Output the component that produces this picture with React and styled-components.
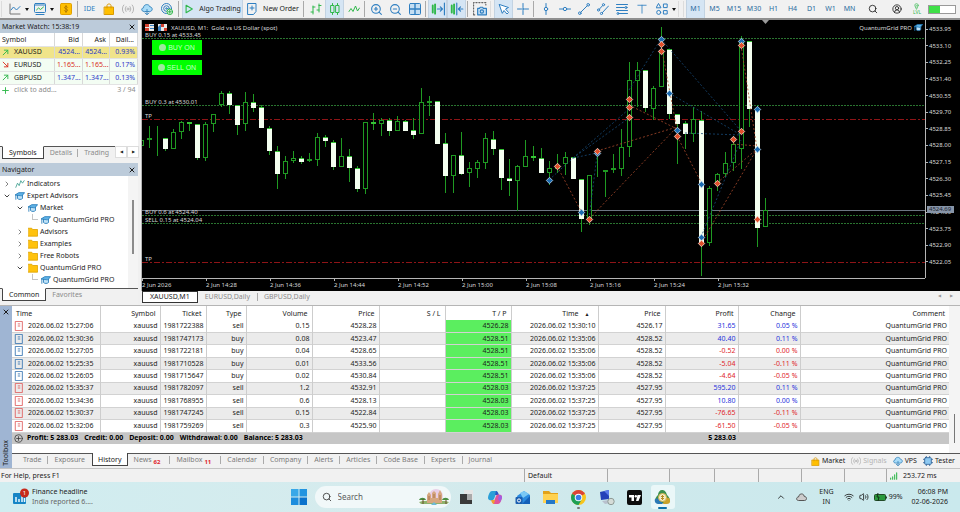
import React, { useState } from 'react';
import styled, { createGlobalStyle, css } from 'styled-components';
import { ZoomIn, ZoomOut, Search, CircleUserRound, Wifi, Volume2, X, ChevronDown, ChevronRight, ChevronUp } from 'lucide-react';

const GlobalStyle = createGlobalStyle`
  * {
    box-sizing: border-box;
  }

  body {
    margin: 0;
    background: #f0f0f0;
    color: #1c1c1c;
    font-family: 'Noto Sans', 'Open Sans', sans-serif;
    font-size: 7px;
    line-height: 10px;
  }

  button,
  input {
    margin: 0;
    padding: 0;
    border: 0;
    background: none;
    color: inherit;
    font: inherit;
  }

  svg {
    display: block;
    flex: none;
  }
`;

const Window = styled.div`
  display: flex;
  flex-direction: column;
  height: 100vh;
  overflow: hidden;
`;

/* ---------- icons ---------- */

const blue = '#2f7fc1';
const green = '#2fb84a';

const Glyph = ({ size = 12, color = blue, children, ...rest }) => (
  <svg
    width={size}
    height={size}
    viewBox="0 0 12 12"
    fill="none"
    stroke={color}
    strokeWidth="1"
    strokeLinecap="round"
    strokeLinejoin="round"
    aria-hidden="true"
    {...rest}
  >
    {children}
  </svg>
);

const LineChartIcon = () => (
  <Glyph color="#777">
    <path d="M1 1v10h10" />
    <path d="M2 7l2.500-3 3 3L11 3.500" stroke={blue} />
  </Glyph>
);

const WindowChartIcon = () => (
  <Glyph>
    <rect x="0.500" y="0.500" width="11" height="9" rx="1" />
    <path d="M1 2h10M2 11.500h8" />
    <path d="M2.500 7l2-2 2 1.500L9.500 4" stroke={green} />
  </Glyph>
);

const DollarIcon = () => (
  <Glyph color="#e0a000">
    <rect x="0.500" y="0.500" width="11" height="11" rx="1" fill="#ffbf00" />
    <path d="M7.500 4.200C7 3 4.500 3.200 4.600 4.700 4.700 6.200 7.500 5.500 7.500 7.200 7.500 8.800 5 9 4.400 7.700M6 2.500v7" stroke="#b07800" />
  </Glyph>
);

const BagIcon = ({ size }) => (
  <Glyph size={size} color="#d99a00">
    <path d="M1.500 4h9v7.500h-9z" fill="#ffbf00" />
    <path d="M4 5V2.500C4 0.500 8 0.500 8 2.500V5" />
  </Glyph>
);

const SignalsIcon = ({ size }) => (
  <Glyph size={size} color="#b4b4b4">
    <circle cx="6" cy="6" r="1" />
    <path d="M4 3.500a4 4 0 0 0 0 5M8 3.500a4 4 0 0 1 0 5M1.800 2a6 6 0 0 0 0 8M10.200 2a6 6 0 0 1 0 8" />
  </Glyph>
);

const CloudDownIcon = ({ size }) => (
  <Glyph size={size} color="#3c87bd">
    <path d="M3 8.500C0 8.500 0 5 2.500 4.800 2.500 1 8 0.500 8.800 3.800 12 4 12 8.500 9 8.500z" fill="#a9dcf8" />
    <path d="M6 6.500v5M4 10l2 1.500L8 10" />
  </Glyph>
);

const RadarIcon = () => (
  <Glyph>
    <circle cx="5.500" cy="5.500" r="5" />
    <circle cx="5.500" cy="5.500" r="2.800" />
    <circle cx="5.500" cy="5.500" r="0.800" />
    <circle cx="8.800" cy="8.800" r="2.800" fill="#f0f0f0" stroke={green} />
    <path d="M8.800 7.300v3M7.300 8.800h3" stroke={green} />
  </Glyph>
);

const PlayIcon = () => (
  <Glyph size={10} color={green}>
    <path d="M2.500 1.500L10 6l-7.500 4.500z" strokeWidth="1.300" />
  </Glyph>
);

const NewOrderIcon = () => (
  <Glyph>
    <path d="M2 0.500h8v8l-2.500 3H2zM4 5h4M6 3v4" />
  </Glyph>
);

const BarsIcon = () => (
  <Glyph color={green}>
    <path d="M3 3v8M1 9h2M3 4h2M9 1v8M7 7h2M9 2.500h2" />
  </Glyph>
);

const CandlesIcon = () => (
  <Glyph color={green}>
    <path d="M3.500 0.500v11M8.500 0.500v11" />
    <rect x="2" y="2.500" width="3" height="7" fill="#d9e7f5" />
    <rect x="7" y="2.500" width="3" height="7" fill="#d9e7f5" />
  </Glyph>
);

const ZigzagIcon = () => (
  <Glyph color={green}>
    <path d="M1 8.500l2-3 2 3 2.500-5.500 2 5 2-3" />
  </Glyph>
);

const TilesIcon = () => (
  <Glyph>
    <rect x="0.500" y="0.500" width="11" height="11" rx="1" fill="#c4def2" />
    <path d="M6 1v10M1 6h10" strokeWidth="1.400" />
  </Glyph>
);

const ScrollEndIcon = () => (
  <Glyph size={14}>
    <path d="M1.500 3v6M3.500 2v8" stroke={green} strokeWidth="1.600" />
    <path d="M5.500 6h4M8 4.200L9.800 6 8 7.800M11.500 1v10" />
  </Glyph>
);

const ShiftIcon = () => (
  <Glyph size={14}>
    <path d="M1.500 3v6M3.500 2v8" stroke={green} strokeWidth="1.600" />
    <path d="M5.800 1v10M11 6H7.500M9 4.200L7.200 6 9 7.800" />
  </Glyph>
);

const CameraIcon = () => (
  <Glyph size={14}>
    <path d="M0.500 11V0.500h10.500v2M0.500 11h2" stroke="#666" strokeDasharray="1 1.500" />
    <path d="M4 5.500h1.500l0.700-1h2l0.700 1h2.600v5.500H4z" fill="#c4def2" />
    <circle cx="7.600" cy="8.200" r="1.400" />
  </Glyph>
);

const CursorIcon = () => (
  <Glyph>
    <path d="M1.500 1.500l9 3L7.500 6l3 3.500-1.500 1.500L6 7.500 4.500 10z" fill="#fff" />
  </Glyph>
);

const CrosshairIcon = () => (
  <Glyph>
    <path d="M6 0.500v4M6 7.500v4M0.500 6h4M7.500 6h4" />
    <circle cx="6" cy="6" r="0.500" />
  </Glyph>
);

const VerticalIcon = () => (
  <Glyph>
    <path d="M6 0.500v3.800M6 7.700v3.800" />
    <circle cx="6" cy="6" r="1.700" />
  </Glyph>
);

const HorizontalIcon = () => (
  <Glyph>
    <path d="M0.500 6h3.800M7.700 6h3.800" />
    <circle cx="6" cy="6" r="1.700" />
  </Glyph>
);

const TrendIcon = () => (
  <Glyph>
    <circle cx="1.800" cy="10.200" r="1.300" />
    <circle cx="10.200" cy="1.800" r="1.300" />
    <path d="M2.800 9.200l6.400-6.400" />
  </Glyph>
);

const ChannelIcon = () => (
  <Glyph>
    <circle cx="1.500" cy="7" r="1.100" />
    <circle cx="6.500" cy="1.700" r="1.100" />
    <circle cx="4.500" cy="10.500" r="1.100" />
    <path d="M2.300 6.200l3.400-3.700M5.300 9.700L11.500 3" />
  </Glyph>
);

const FibIcon = () => (
  <Glyph>
    <path d="M0.500 1.500h11M0.500 4.500h8M0.500 7.500h11M3 10.500h8.500" />
    <circle cx="10" cy="4.500" r="1" />
    <circle cx="2" cy="10.500" r="1" />
  </Glyph>
);

const TextToolIcon = () => (
  <Glyph size={10}>
    <path d="M1 1.500h10M6 1.500v9.500" />
  </Glyph>
);

const ShapesIcon = () => (
  <Glyph>
    <path d="M2.700 0.800L5 4.800H0.500zM7.800 1h3.400v3.600H7.800z" />
    <circle cx="2.700" cy="9.400" r="2" />
    <rect x="7.800" y="7.600" width="3.400" height="3.400" />
  </Glyph>
);

const LevelIcon = () => (
  <Glyph color={green} size={7}>
    <circle cx="6" cy="4" r="3" />
    <path d="M4 7l2 4 2-4M5 4h2" />
  </Glyph>
);

const CapIcon = ({ size = 10 }) => (
  <Glyph size={size} color="#1f78b8">
    <path d="M3 5v4c1.500 1.500 4.500 1.500 6 0V5" fill="#bfe2f7" />
    <path d="M0.500 4.500L4.500 2h7L8.500 5.500z" fill="#5fb2e6" />
    <path d="M1 5v5" />
  </Glyph>
);

const FolderIcon = ({ size = 10 }) => (
  <Glyph size={size} color="#dfa300">
    <path d="M0.500 1.500h4l1 1.500h6v8h-11z" fill="#ffc20d" />
  </Glyph>
);

const IndicatorIcon = () => (
  <Glyph size={10} color="#3f9f8f">
    <path d="M1 10l2-5 2 3 2-6 2 3 2-3" />
  </Glyph>
);

const DocIcon = ({ side }) => (
  <Glyph size={10} color={side === 'buy' ? '#2e6fae' : '#dd5555'}>
    <path d="M2 0.500h8v11H2zM5 3.500h2M5 6h2" />
  </Glyph>
);

/* ---------- toolbar ---------- */

const Toolbar = styled.header`
  display: flex;
  align-items: stretch;
  flex: none;
  height: 20px;
  border-bottom: 2px solid #8f8f8f;
  background: #f1f1f1;
  overflow: hidden;
`;

const ToolButton = styled.button`
  display: flex;
  flex: none;
  align-items: center;
  justify-content: center;
  gap: 5px;
  width: ${({ $w }) => $w || 19}px;
  color: ${({ $color }) => $color || '#1c1c1c'};
  white-space: nowrap;

  ${({ $active }) =>
    $active &&
    css`
      background: #d5e5f4;
      border-left: 1px solid #c3d3e2;
      border-right: 1px solid #c3d3e2;
    `}
`;

const Caret = styled.button`
  display: flex;
  flex: none;
  align-items: center;
  justify-content: center;
  width: 6px;

  &::before {
    content: '';
    border: 2px solid transparent;
    border-top: 3px solid #111;
    border-bottom: 0;
  }
`;

const Separator = styled.span`
  flex: none;
  width: 1px;
  margin: 1px ${({ $wide }) => ($wide ? 3 : 2)}px 1px 1px;
  background: ${({ $faint }) => ($faint ? '#dcdcdc' : '#a9a9a9')};
`;

const Battery = styled.div`
  flex: none;
  width: 28px;
  height: 9px;
  margin: 5px 0;
  border: 1px solid #999;
  background: linear-gradient(90deg, #3fe048 11px, #fff 11px);
`;

const LevelLabel = styled.span`
  display: flex;
  flex-direction: column;
  align-items: center;
  color: ${green};
  font-size: 5px;
  line-height: 5px;
`;

const timeframes = ['M1', 'M5', 'M15', 'M30', 'H1', 'H4', 'D1', 'W1', 'MN'];

const TopToolbar = () => {
  const [frame, setFrame] = useState('M1');

  return (
    <Toolbar>
      <Separator $wide $faint />
      <ToolButton aria-label="Line chart"><LineChartIcon /></ToolButton>
      <Caret aria-label="Chart menu" />
      <ToolButton aria-label="Indicators"><WindowChartIcon /></ToolButton>
      <Caret aria-label="Indicator menu" />
      <ToolButton $w={21} aria-label="Trade"><DollarIcon /></ToolButton>
      <Separator />
      <ToolButton $color={blue}>IDE</ToolButton>
      <ToolButton aria-label="Market"><BagIcon /></ToolButton>
      <ToolButton aria-label="Signals"><SignalsIcon /></ToolButton>
      <ToolButton aria-label="VPS"><CloudDownIcon /></ToolButton>
      <ToolButton $w={21} aria-label="Network"><RadarIcon /></ToolButton>
      <Separator $wide />
      <ToolButton $w={61} $active><PlayIcon />Algo Trading</ToolButton>
      <ToolButton $w={59}><NewOrderIcon />New Order</ToolButton>
      <Separator />
      <ToolButton aria-label="Bars"><BarsIcon /></ToolButton>
      <ToolButton $active aria-label="Candles"><CandlesIcon /></ToolButton>
      <ToolButton aria-label="Line"><ZigzagIcon /></ToolButton>
      <Separator />
      <ToolButton $color={blue} aria-label="Zoom in"><ZoomIn size={13} strokeWidth={2} /></ToolButton>
      <ToolButton $color={blue} aria-label="Zoom out"><ZoomOut size={13} strokeWidth={2} /></ToolButton>
      <ToolButton aria-label="Tile windows"><TilesIcon /></ToolButton>
      <Separator />
      <ToolButton $active aria-label="Auto scroll"><ScrollEndIcon /></ToolButton>
      <ToolButton $active aria-label="Chart shift"><ShiftIcon /></ToolButton>
      <Separator />
      <ToolButton aria-label="Screenshot"><CameraIcon /></ToolButton>
      <Separator $wide $faint />
      <ToolButton $active aria-label="Cursor"><CursorIcon /></ToolButton>
      <ToolButton aria-label="Crosshair"><CrosshairIcon /></ToolButton>
      <Separator />
      <ToolButton aria-label="Vertical line"><VerticalIcon /></ToolButton>
      <ToolButton aria-label="Horizontal line"><HorizontalIcon /></ToolButton>
      <ToolButton aria-label="Trend line"><TrendIcon /></ToolButton>
      <ToolButton aria-label="Channel"><ChannelIcon /></ToolButton>
      <ToolButton aria-label="Fibonacci"><FibIcon /></ToolButton>
      <ToolButton $w={21} aria-label="Text"><TextToolIcon /></ToolButton>
      <ToolButton aria-label="Shapes"><ShapesIcon /></ToolButton>
      <Caret aria-label="Shape menu" />
      <Separator $wide $faint />
      <Separator $faint />
      {timeframes.map(name => (
        <ToolButton
          key={name}
          $w={name.length > 2 ? 20 : 19}
          $color="#2b6c9f"
          $active={frame === name}
          onClick={() => setFrame(name)}
        >
          {name}
        </ToolButton>
      ))}
      <ToolButton $w={28} aria-label="Search"><Search size={10} strokeWidth={2} /></ToolButton>
      <ToolButton aria-label="Account"><CircleUserRound size={10} strokeWidth={2} /></ToolButton>
      <ToolButton $w={22} aria-label="Level">
        <LevelLabel><LevelIcon />LVL</LevelLabel>
      </ToolButton>
      <Battery />
    </Toolbar>
  );
};

/* ---------- side panels ---------- */

const Workspace = styled.main`
  display: grid;
  grid-template-columns: 138px minmax(0, 1fr);
  column-gap: 3px;
  flex: 1;
  min-height: 0;
`;

const Sidebar = styled.aside`
  display: flex;
  flex-direction: column;
  min-height: 0;
`;

const Panel = styled.section`
  display: flex;
  flex-direction: column;
  min-height: 0;
  height: ${({ $height }) => ($height ? `${$height}px` : 'auto')};
  flex: ${({ $height }) => ($height ? 'none' : '1')};
`;

const PanelTitle = styled.h2`
  display: flex;
  align-items: center;
  justify-content: space-between;
  flex: none;
  height: 13px;
  margin: 0;
  padding: 0 2px;
  background: #bccbda;
  font-size: 7px;
  font-weight: 400;
`;

const PanelBody = styled.div`
  flex: 1;
  min-height: 0;
  background: #fff;
  overflow: hidden;
`;

const PanelTabs = styled.div`
  display: flex;
  align-items: flex-start;
  flex: none;
  height: ${({ $height }) => $height}px;
  padding-left: 2px;
  background: linear-gradient(#555, #555) top / 100% 1px no-repeat #f1f1f1;
`;

const PanelTab = styled.button`
  height: 13px;
  padding: 0 6px;
  color: #8b8b8b;
  white-space: nowrap;
  background: linear-gradient(#aaa, #aaa) right 3px / 1px 8px no-repeat;

  &:last-of-type {
    background: none;
  }

  ${({ $active }) =>
    $active &&
    css`
      border: 1px solid #444;
      border-top-color: #fff;
      background: #fff;
      color: #1c1c1c;
    `}
`;

const TabArrows = styled.div`
  display: flex;
  margin-left: auto;
  height: 12px;

  button {
    width: 12px;
    border: 1px solid #ddd;
    background: #fff;
    font-size: 4px;
    line-height: 8px;
  }
`;

const QuoteTable = styled.table`
  width: 100%;
  height: 63px;
  border-collapse: collapse;
  table-layout: fixed;

  th,
  td {
    height: 12px;
    padding: 0 2px;
    border-right: 1px solid #d8d8d8;
    border-bottom: 1px solid #e3e3e3;
    font-weight: 400;
    line-height: 10px;
    text-align: right;
    vertical-align: middle;
    white-space: nowrap;
  }

  th {
    height: 13px;
    padding: 2px 3px 0 2px;
  }

  th:first-child,
  td:first-child {
    text-align: left;
  }

  tfoot td {
    border: 0;
    color: #8b8b8b;
  }
`;

const QuoteRow = styled.tr`
  background: ${({ $selected }) => ($selected ? '#f0e48a' : '#f3fdf3')};
`;

const Quote = styled.td`
  color: ${({ $down }) => ($down ? '#d9301f' : '#2b39c9')};
`;

const SymbolName = styled.span`
  display: flex;
  align-items: center;
  gap: 5px;
`;

const quotes = [
  { name: 'XAUUSD', bid: '4524...', ask: '4524...', daily: '0.93%' },
  { name: 'EURUSD', bid: '1.165...', ask: '1.165...', daily: '0.17%', down: true },
  { name: 'GBPUSD', bid: '1.347...', ask: '1.347...', daily: '0.13%' },
];

const MarketWatch = () => (
  <Panel $height={143}>
    <PanelTitle>
      Market Watch: 15:38:19
      <X size={8} strokeWidth={3} />
    </PanelTitle>
    <PanelBody>
      <QuoteTable>
        <colgroup>
          <col />
          <col width="28" />
          <col width="27" />
          <col width="28" />
        </colgroup>
        <thead>
          <tr>
            <th>Symbol</th>
            <th>Bid</th>
            <th>Ask</th>
            <th>Dail...</th>
          </tr>
        </thead>
        <tbody>
          {quotes.map((q, i) => (
            <QuoteRow key={q.name} $selected={i === 0}>
              <td>
                <SymbolName>
                  <Glyph size={7} color={q.down ? '#d9301f' : green}>
                    {q.down ? <path d="M2 2l8 8M10 4v6H4" strokeWidth="1.600" /> : <path d="M2 10l8-8M4 2h6v6" strokeWidth="1.600" />}
                  </Glyph>
                  {q.name}
                </SymbolName>
              </td>
              <Quote $down={q.down}>{q.bid}</Quote>
              <Quote $down={q.down}>{q.ask}</Quote>
              <Quote>{q.daily}</Quote>
            </QuoteRow>
          ))}
        </tbody>
        <tfoot>
          <tr>
            <td colSpan="2">
              <SymbolName>
                <Glyph size={7} color={green}><path d="M6 1v10M1 6h10" strokeWidth="1.600" /></Glyph>
                click to add...
              </SymbolName>
            </td>
            <td colSpan="2">3 / 94</td>
          </tr>
        </tfoot>
      </QuoteTable>
    </PanelBody>
    <PanelTabs $height={17}>
      <PanelTab $active>Symbols</PanelTab>
      <PanelTab>Details</PanelTab>
      <PanelTab>Trading</PanelTab>
      <TabArrows>
        <button aria-label="Scroll left">◀</button>
        <button aria-label="Scroll right">▶</button>
      </TabArrows>
    </PanelTabs>
  </Panel>
);

const TreeBody = styled(PanelBody)`
  display: flex;
  background: linear-gradient(90deg, #fff 128px, #f4f4f4 128px);
`;

const Tree = styled.ul`
  flex: 1;
  margin: 0;
  padding: 2px 0 0 1px;
  list-style: none;
`;

const TreeItem = styled.li`
  display: flex;
  align-items: center;
  gap: 2px;
  height: 12px;
  padding-left: ${({ $level }) => $level * 13}px;
  white-space: nowrap;
`;

const Branch = styled.span`
  display: flex;
  flex: none;
  align-items: center;
  justify-content: center;
  width: 12px;
  height: 12px;
  color: #444;
`;

const Elbow = styled.span`
  align-self: flex-start;
  width: 6px;
  height: 6px;
  margin-left: 4px;
  border-left: 1px solid #c4c4c4;
  border-bottom: 1px solid #c4c4c4;
`;

const ScrollThumb = styled.span`
  flex: none;
  width: 2px;
  height: 54px;
  margin: 24px 4px 0 0;
  background: #8b8b8b;
`;

const tree = [
  { label: 'Indicators', level: 0, icon: IndicatorIcon },
  { label: 'Expert Advisors', level: 0, icon: CapIcon, open: true },
  { label: 'Market', level: 1, icon: CapIcon, open: true },
  { label: 'QuantumGrid PRO', level: 2, icon: CapIcon, leaf: true },
  { label: 'Advisors', level: 1, icon: FolderIcon },
  { label: 'Examples', level: 1, icon: FolderIcon },
  { label: 'Free Robots', level: 1, icon: FolderIcon },
  { label: 'QuantumGrid PRO', level: 1, icon: FolderIcon, open: true },
  { label: 'QuantumGrid PRO', level: 2, icon: CapIcon, leaf: true },
];

const Navigator = () => (
  <Panel>
    <PanelTitle>
      Navigator
      <X size={8} strokeWidth={3} />
    </PanelTitle>
    <TreeBody>
      <Tree>
        {tree.map(({ label, level, icon: Icon, open, leaf }, i) => (
          <TreeItem key={i} $level={level}>
            <Branch>
              {leaf && <Elbow />}
              {!leaf && open && <ChevronDown size={8} strokeWidth={3} />}
              {!leaf && !open && <ChevronRight size={8} strokeWidth={2} />}
            </Branch>
            <Icon />
            {label}
          </TreeItem>
        ))}
      </Tree>
      <ScrollThumb />
    </TreeBody>
    <PanelTabs $height={17}>
      <PanelTab $active>Common</PanelTab>
      <PanelTab>Favorites</PanelTab>
    </PanelTabs>
  </Panel>
);

/* ---------- chart ---------- */

const ChartColumn = styled.div`
  display: flex;
  flex-direction: column;
  min-width: 0;
  min-height: 0;
`;

const ChartWindow = styled.section`
  display: grid;
  grid-template-columns: minmax(0, 1fr) 35px;
  grid-template-rows: minmax(0, 1fr) 13px;
  flex: 1;
  min-height: 0;
  background: #000;
  border-left: 1px solid #b5b5b5;
  color: #d8d8d8;
  font-size: 6px;
  line-height: 8px;
`;

const Plot = styled.div`
  position: relative;
  min-width: 0;
  overflow: hidden;

  > svg {
    width: 100%;
    height: 100%;
  }
`;

const PriceAxis = styled.ol`
  position: relative;
  display: flex;
  flex-direction: column;
  justify-content: space-between;
  margin: 0;
  padding: 5px 0 12px;
  border-left: 1px solid #b5b5b5;
  list-style: none;

  li {
    display: flex;
    align-items: center;
    gap: 1px;
  }

  li::before {
    content: '';
    width: 2px;
    height: 1px;
    background: #b5b5b5;
  }
`;

const CurrentPrice = styled.span`
  position: absolute;
  top: 186px;
  left: 1px;
  width: 27px;
  padding-left: 2px;
  background: #8795a8;
  color: #1b2430;
  line-height: 7px;
`;

const TimeAxis = styled.ol`
  display: flex;
  margin: 0;
  padding: 0;
  border-top: 1px solid #b5b5b5;
  list-style: none;
  overflow: hidden;

  li {
    flex: none;
    width: 64px;
    padding-top: 2px;
    background: linear-gradient(#b5b5b5, #b5b5b5) 0 0 / 1px 2px no-repeat;
  }
`;

const ChartTitle = styled.div`
  position: absolute;
  top: 3px;
  left: 3px;
  right: 2px;
  display: flex;
  align-items: center;
  gap: 4px;

  span {
    margin-right: auto;
  }

  svg:last-child {
    margin-left: -2px;
  }
`;

const TradeButtons = styled.div`
  position: absolute;
  top: 20px;
  left: 10px;
  display: flex;
  flex-direction: column;
  gap: 5px;
`;

const TradeButton = styled.button`
  display: flex;
  align-items: center;
  justify-content: center;
  gap: 2px;
  width: 50px;
  height: 15px;
  background: #00ff00;
  color: #c4ffc4;
  font-family: 'Liberation Sans', Arial, sans-serif;
  font-size: 7px;

  &::before {
    content: '';
    width: 7px;
    height: 7px;
    border-radius: 50%;
    background: #9fe89f;
  }
`;

// [wick top, body top, body bottom, wick bottom, falling]
const candles = [
  [140, 140, 146, 146], [126, 138, 140, 148], [126, 138, 139, 156], [138, 138, 149, 151, 1],
  [129, 132, 149, 149], [121, 122, 132, 139], [122, 122, 124, 131, 1], [124, 124, 158, 160, 1],
  [122, 124, 158, 161], [114, 114, 124, 132], [91, 93, 105, 107], [91, 93, 105, 114, 1],
  [105, 105, 125, 135, 1], [92, 102, 124, 131], [94, 102, 108, 112, 1], [105, 107, 128, 128, 1],
  [126, 128, 151, 155, 1], [146, 151, 174, 189, 1], [156, 161, 174, 179], [151, 158, 161, 163],
  [156, 158, 162, 164, 1], [153, 159, 161, 162], [133, 137, 160, 166], [135, 137, 141, 147, 1],
  [140, 142, 167, 170, 1], [138, 156, 167, 167], [149, 156, 168, 182, 1], [166, 168, 189, 192, 1],
  [122, 122, 189, 194], [113, 122, 124, 130, 1], [118, 120, 124, 136], [118, 120, 131, 136, 1],
  [116, 121, 131, 131], [120, 121, 131, 131, 1], [118, 130, 135, 139, 1], [88, 102, 134, 134],
  [96, 101, 103, 116], [101, 101, 144, 144, 1], [133, 143, 176, 193, 1], [155, 155, 176, 193],
  [132, 155, 174, 175, 1], [162, 168, 173, 187], [160, 162, 169, 178], [133, 138, 163, 169],
  [131, 139, 149, 155, 1], [149, 149, 178, 190, 1], [159, 178, 181, 196, 1], [165, 166, 181, 211],
  [140, 156, 167, 167], [146, 156, 158, 161, 1], [148, 158, 173, 173, 1], [161, 168, 173, 185],
  [154, 165, 169, 173], [152, 157, 164, 175], [157, 157, 179, 179, 1], [179, 179, 219, 232, 1],
  [175, 175, 219, 225], [152, 170, 171, 177, 1], [170, 170, 172, 197], [154, 168, 170, 173],
  [129, 147, 169, 176], [62, 80, 147, 157], [62, 70, 81, 107], [70, 70, 108, 112, 1],
  [86, 88, 109, 120], [27, 50, 87, 87], [49, 49, 114, 119, 1], [114, 114, 124, 164, 1],
  [121, 123, 134, 149, 1], [107, 119, 134, 142], [111, 120, 243, 276, 1], [186, 188, 243, 246],
  [173, 174, 182, 191], [152, 163, 174, 177], [140, 144, 163, 171], [36, 40, 149, 169],
  [41, 41, 109, 127, 1], [105, 109, 228, 247, 1], [198, 210, 227, 227],
];

const buys = [[549, 180], [581, 212], [597, 153], [661, 39], [669, 93], [677, 130], [701, 184], [701, 237], [741, 41], [757, 109], [757, 149]];
const sells = [
  [557, 166], [589, 219], [597, 151], [629, 99], [629, 107], [629, 117], [661, 44], [661, 51],
  [677, 136], [701, 243], [717, 183], [733, 139], [741, 131], [741, 45], [757, 219],
];

const buyLinks = [
  [549, 180, 573, 158], [573, 158, 597, 153], [573, 158, 629, 118], [573, 158, 629, 109], [589, 219, 597, 155],
  [629, 90, 661, 39], [661, 39, 741, 131], [669, 93, 741, 135], [685, 133, 741, 135], [701, 237, 741, 140],
];
const sellLinks = [
  [557, 166, 581, 211], [589, 219, 677, 127], [597, 151, 677, 127], [629, 105, 677, 129], [661, 45, 677, 130],
  [677, 136, 701, 182], [701, 243, 757, 149], [717, 183, 757, 149], [733, 144, 757, 146], [741, 45, 757, 149],
];

const levels = [
  { y: 38, label: 'BUY 0.15 at 4533.45' },
  { y: 105, label: 'BUY 0.3 at 4530.01' },
  { y: 119, label: 'TP', stop: true },
  { y: 215, label: 'BUY 0.6 at 4524.40' },
  { y: 223, label: 'SELL 0.15 at 4524.04' },
  { y: 262, label: 'TP', stop: true },
];

const prices = [
  '4533.95', '4533.10', '4532.25', '4531.40', '4530.55', '4529.70', '4528.85', '4528.00',
  '4527.15', '4526.30', '4525.45', '4524.60', '4523.75', '4522.90', '4522.05',
];

const times = ['2 Jun 2026', '2 Jun 14:28', '2 Jun 14:36', '2 Jun 14:44', '2 Jun 14:52', '2 Jun 15:00', '2 Jun 15:08', '2 Jun 15:16', '2 Jun 15:24', '2 Jun 15:32'];

const Marker = ({ x, y, color, edge }) => (
  <g transform={`translate(${x + 0.5} ${y + 0.5})`}>
    <path d="M0-3.200L3.200 0 0 3.200-3.200 0z" fill={color} stroke={edge} strokeWidth="0.900" />
  </g>
);

const CandlePlot = () => (
  <svg aria-label="XAUUSD M1 candles">
    <g transform="translate(-142 -20)" shapeRendering="crispEdges">
      {levels.map(({ y, stop }) => (
        <line
          key={y}
          x1="142"
          x2="3000"
          y1={y + 0.5}
          y2={y + 0.5}
          stroke={stop ? '#8e1417' : '#2a7430'}
          strokeDasharray={stop ? '6 2 2 2' : '2 1'}
        />
      ))}
      <line x1="142" x2="3000" y1="210.500" y2="210.500" stroke="#6d7683" />
      {candles.map(([high, top, bottom, low, falling], i) => {
        const x = 141 + i * 8;
        return (
          <g key={i} stroke={falling ? '#35c435' : '#1f9a22'}>
            <line x1={x + 0.5} x2={x + 0.5} y1={high} y2={low} stroke="#1f9a22" />
            <rect x={x - 1.5} y={top + 0.5} width="4" height={Math.max(bottom - top - 1, 0)} fill={falling ? '#fff' : '#000'} />
            {falling && bottom - top > 2 && <rect x={x - 2} y={top + 1} width="5" height={bottom - top - 1} fill="#f4fff0" stroke="none" />}
          </g>
        );
      })}
    </g>
    <g transform="translate(-142 -20)">
      {buyLinks.map(([x1, y1, x2, y2], i) => (
        <line key={i} x1={x1} y1={y1} x2={x2} y2={y2} stroke="#174a78" strokeWidth="0.800" strokeDasharray="2 2" />
      ))}
      {sellLinks.map(([x1, y1, x2, y2], i) => (
        <line key={i} x1={x1} y1={y1} x2={x2} y2={y2} stroke="#a84a2c" strokeWidth="0.800" strokeDasharray="2 2" />
      ))}
      {buys.map(([x, y]) => <Marker key={`${x}-${y}`} x={x} y={y} color="#1c6cb0" edge="#a9c6e0" />)}
      {sells.map(([x, y]) => <Marker key={`${x}-${y}`} x={x} y={y} color="#e2502c" edge="#f0c8bb" />)}
      {levels.map(({ y, label }) => (
        <text key={y} x="145" y={y - 1} fill="#d8d8d8">{label}</text>
      ))}
      <path d="M762 20h7l-3.500 4z" fill="#9a9a9a" />
    </g>
  </svg>
);

const ChartTabs = styled.nav`
  display: flex;
  align-items: flex-start;
  flex: none;
  height: 14px;
  padding-left: 1px;
  background: #f1f1f1;
`;

const ChartTab = styled.button`
  height: 12px;
  padding: 0 7px;
  color: #8b8b8b;
  line-height: 10px;

  & + & + & {
    background: linear-gradient(#aaa, #aaa) left 2px / 1px 8px no-repeat;
  }

  ${({ $active }) =>
    $active &&
    css`
      border: 1px solid #333;
      background: #fff;
      color: #1c1c1c;
    `}
`;

const PageArrows = styled.span`
  display: flex;
  gap: 9px;
  margin-left: auto;
  padding-right: 7px;
  color: #999;
  font-size: 4px;
`;

const Chart = () => (
  <ChartColumn>
    <ChartWindow>
      <Plot>
        <CandlePlot />
        <ChartTitle>
          <svg width="9" height="7" viewBox="0 0 9 7" aria-hidden="true">
            <path d="M0 0h9v7H0z" fill="#e8e8e8" />
            <path d="M0 0h4v3H0zM0 4h4v3H0z" fill="#d2412f" />
            <path d="M5 1h4v1H5zM5 4h4v1H5z" fill="#3b7fc0" />
          </svg>
          <svg width="9" height="7" viewBox="0 0 9 7" aria-hidden="true">
            <path d="M0 0h9v7H0z" fill="#e8e8e8" />
            <path d="M0 3l3-3v7H0z" fill="#3b7fc0" />
            <path d="M3 0h3v3H3zM6 4h3v3H6z" fill="#d2412f" />
          </svg>
          <span>XAUUSD, M1:&nbsp; Gold vs US Dollar (spot)</span>
          QuantumGrid PRO
          <CapIcon size={9} />
        </ChartTitle>
        <TradeButtons>
          <TradeButton>BUY ON</TradeButton>
          <TradeButton>SELL ON</TradeButton>
        </TradeButtons>
      </Plot>
      <PriceAxis>
        {prices.map(price => <li key={price}>{price}</li>)}
        <CurrentPrice>4524.69</CurrentPrice>
      </PriceAxis>
      <TimeAxis>
        {times.map(time => <li key={time}>{time}</li>)}
      </TimeAxis>
    </ChartWindow>
    <ChartTabs>
      <ChartTab $active>XAUUSD,M1</ChartTab>
      <ChartTab>EURUSD,Daily</ChartTab>
      <ChartTab>GBPUSD,Daily</ChartTab>
      <PageArrows><span>◀</span><span>▶</span></PageArrows>
    </ChartTabs>
  </ChartColumn>
);

/* ---------- toolbox ---------- */

const Toolbox = styled.section`
  display: grid;
  grid-template-columns: 12px minmax(0, 1fr);
  flex: none;
  border-top: 1px solid #b5b5b5;
`;

const ToolboxRail = styled.div`
  display: flex;
  flex-direction: column;
  align-items: center;
  justify-content: space-between;
  padding: 2px 0;
  background: #9fb5d3;

  span {
    writing-mode: vertical-rl;
    transform: rotate(180deg);
  }
`;

const HistoryArea = styled.div`
  display: flex;
  height: 147px;
  background: #fff;
`;

const ScrollTrack = styled.div`
  flex: none;
  width: 11px;
  padding: 108px 0 0 5px;
  background: #f4f4f4;

  &::before {
    content: '';
    display: block;
    width: 1px;
    height: 29px;
    background: #777;
  }
`;

const HistoryTable = styled.table`
  flex: 1;
  width: 100%;
  min-width: 0;
  height: 138px;
  border-collapse: collapse;
  table-layout: fixed;

  th,
  td {
    height: 12px;
    padding: 0 2px;
    border-right: 1px solid #cdcdcd;
    font-weight: 400;
    line-height: 10px;
    text-align: right;
    vertical-align: middle;
    white-space: nowrap;
  }

  th {
    height: 14px;
    padding: 1px 4px 0;
  }

  th:first-child,
  td:first-child {
    text-align: left;
  }

  th:last-child,
  td:last-child {
    border-right: 0;
  }

  tbody tr {
    border-bottom: 1px solid #d2d2d2;
  }

  tbody tr:nth-child(even) {
    background: #ebebeb;
  }

  tfoot td {
    border: 0;
    background: #c6c6c6;
    color: #000;
    font-weight: 700;
  }
`;

const SortArrow = styled.span`
  margin: 0 4px 0 6px;
  font-size: 5px;
`;

const TimeCell = styled.span`
  display: flex;
  align-items: center;
  gap: 4px;
`;

const Totals = styled.span`
  display: flex;
  gap: 6px;
`;

const Target = styled.td`
  background: #5bee5f;
`;

const Amount = styled.td`
  color: ${({ $loss }) => ($loss ? '#e0262c' : '#2733dc')};
`;

const deals = [
  ['2026.06.02 15:27:06', '1981722388', 'sell', '0.15', '4528.28', '4526.28', '2026.06.02 15:30:10', '4526.17', '31.65', '0.05 %'],
  ['2026.06.02 15:30:36', '1981747173', 'buy', '0.08', '4523.47', '4528.51', '2026.06.02 15:35:06', '4528.52', '40.40', '0.11 %'],
  ['2026.06.02 15:27:05', '1981722181', 'buy', '0.04', '4528.65', '4528.51', '2026.06.02 15:35:06', '4528.52', '-0.52', '0.00 %'],
  ['2026.06.02 15:25:35', '1981710528', 'buy', '0.01', '4533.56', '4528.51', '2026.06.02 15:35:06', '4528.52', '-5.04', '-0.11 %'],
  ['2026.06.02 15:26:05', '1981715647', 'buy', '0.02', '4530.84', '4528.51', '2026.06.02 15:35:06', '4528.52', '-4.64', '-0.05 %'],
  ['2026.06.02 15:35:37', '1981782097', 'sell', '1.2', '4532.91', '4528.03', '2026.06.02 15:37:25', '4527.95', '595.20', '0.11 %'],
  ['2026.06.02 15:34:36', '1981768955', 'sell', '0.6', '4528.13', '4528.03', '2026.06.02 15:37:25', '4527.95', '10.80', '0.00 %'],
  ['2026.06.02 15:30:37', '1981747245', 'sell', '0.15', '4522.84', '4528.03', '2026.06.02 15:37:25', '4527.95', '-76.65', '-0.11 %'],
  ['2026.06.02 15:32:06', '1981759269', 'sell', '0.3', '4525.90', '4528.03', '2026.06.02 15:37:25', '4527.95', '-61.50', '-0.05 %'],
];

const columnWidths = [88, 60, 46, 40, 66, 67, 66, 66, 87, 67, 73, 62];

const ToolboxTabs = styled.nav`
  display: flex;
  align-items: flex-start;
  height: 15px;
  padding: 0 5px;
  background: linear-gradient(#555, #555) top / 100% 1px no-repeat #f1f1f1;
`;

const ToolboxTab = styled.button`
  flex: none;
  height: 13px;
  padding: 1px 7px 0 6px;
  color: #7b7b7b;
  white-space: nowrap;
  background: linear-gradient(#aaa, #aaa) right 3px / 1px 8px no-repeat;

  sub {
    margin: 0 3px 0 2px;
    color: #e0262c;
    font-size: 6px;
    font-weight: 700;
    line-height: 6px;
  }

  ${({ $plain }) =>
    $plain &&
    css`
      background: none;
    `}

  ${({ $active }) =>
    $active &&
    css`
      padding: 1px 5px 0;
      border: 1px solid #444;
      border-top: 0;
      background: #fff;
      color: #1c1c1c;
    `}
`;

const ServiceLinks = styled.div`
  display: flex;
  align-items: center;
  gap: 6px;
  height: 16px;
  margin-left: auto;

  button {
    display: flex;
    align-items: center;
    gap: 2px;
  }

  button:nth-child(2) {
    color: #b4b4b4;
  }
`;

const History = () => (
  <HistoryArea>
    <HistoryTable>
      <colgroup>
        {columnWidths.map((w, i) => <col key={i} width={w} />)}
        <col />
      </colgroup>
      <thead>
        <tr>
          <th>Time</th>
          <th>Symbol</th>
          <th>Ticket</th>
          <th>Type</th>
          <th>Volume</th>
          <th>Price</th>
          <th>S / L</th>
          <th>T / P</th>
          <th>Time<SortArrow>▲</SortArrow></th>
          <th>Price</th>
          <th>Profit</th>
          <th>Change</th>
          <th>Comment</th>
        </tr>
      </thead>
      <tbody>
        {deals.map(([opened, ticket, side, volume, price, target, closed, exit, profit, change]) => (
          <tr key={ticket}>
            <td><TimeCell><DocIcon side={side} />{opened}</TimeCell></td>
            <td>xauusd</td>
            <td>{ticket}</td>
            <td>{side}</td>
            <td>{volume}</td>
            <td>{price}</td>
            <td />
            <Target>{target}</Target>
            <td>{closed}</td>
            <td>{exit}</td>
            <Amount $loss={profit.startsWith('-')}>{profit}</Amount>
            <Amount $loss={profit.startsWith('-')}>{change}</Amount>
            <td>QuantumGrid PRO</td>
          </tr>
        ))}
      </tbody>
      <tfoot>
        <tr>
          <td colSpan="10">
            <TimeCell>
              <Glyph size={9} color="#333"><circle cx="6" cy="6" r="5" /><path d="M6 3.500v5M3.500 6h5" /></Glyph>
              <Totals>
                <span>Profit: 5 283.03</span>
                <span>Credit: 0.00</span>
                <span>Deposit: 0.00</span>
                <span>Withdrawal: 0.00</span>
                <span>Balance: 5 283.03</span>
              </Totals>
            </TimeCell>
          </td>
          <td>5 283.03</td>
          <td colSpan="2" />
        </tr>
      </tfoot>
    </HistoryTable>
    <ScrollTrack />
  </HistoryArea>
);

const BottomToolbox = () => (
  <Toolbox>
    <ToolboxRail>
      <X size={8} strokeWidth={3} />
      <span>Toolbox</span>
    </ToolboxRail>
    <div>
      <History />
      <ToolboxTabs>
        <ToolboxTab>Trade</ToolboxTab>
        <ToolboxTab $plain>Exposure</ToolboxTab>
        <ToolboxTab $active>History</ToolboxTab>
        <ToolboxTab>News<sub>62</sub></ToolboxTab>
        <ToolboxTab>Mailbox<sub>11</sub></ToolboxTab>
        <ToolboxTab>Calendar</ToolboxTab>
        <ToolboxTab>Company</ToolboxTab>
        <ToolboxTab>Alerts</ToolboxTab>
        <ToolboxTab>Articles</ToolboxTab>
        <ToolboxTab>Code Base</ToolboxTab>
        <ToolboxTab>Experts</ToolboxTab>
        <ToolboxTab $plain>Journal</ToolboxTab>
        <ServiceLinks>
          <button><BagIcon size={9} />Market</button>
          <button><SignalsIcon size={10} />Signals</button>
          <button><CloudDownIcon size={10} />VPS</button>
          <button>
            <Glyph size={10} color="#2a5f95">
              <rect x="2" y="2" width="8" height="8" rx="1" fill="#8fcaf2" />
              <path d="M4 0.500v1M8 0.500v1M4 10.500v1M8 10.500v1M0.500 4h1M0.500 8h1M10.500 4h1M10.500 8h1" />
            </Glyph>
            Tester
          </button>
        </ServiceLinks>
      </ToolboxTabs>
    </div>
  </Toolbox>
);

const StatusBar = styled.footer`
  display: grid;
  grid-template-columns: minmax(0, 1fr) 83px 62px 45px 44px 43px 43px 42px 74px;
  flex: none;
  height: 14px;
  border-top: 1px solid #c4c4c4;
  background: #f1f1f1;

  span {
    display: flex;
    align-items: center;
    gap: 5px;
    padding: 0 3px;
    border-left: 1px solid #aaa;
  }

  span:first-child {
    padding: 0 1px;
    border-left: 0;
  }
`;

/* ---------- desktop taskbar ---------- */

const Taskbar = styled.footer`
  display: grid;
  grid-template-columns: minmax(0, 1fr) auto minmax(0, 1fr);
  align-items: center;
  flex: none;
  height: 30px;
  padding: 0 12px 0 13px;
  background: linear-gradient(90deg, #d0edf0, #d6ebed 40%, #cfe9ec 60%, #cae9ed);
`;

const NewsWidget = styled.button`
  display: flex;
  align-items: center;
  gap: 3px;
  text-align: left;

  small {
    display: block;
    color: #666;
    font-size: 7px;
  }
`;

const Apps = styled.div`
  display: flex;
  align-items: center;
  gap: 4px;
`;

const AppButton = styled.button`
  position: relative;
  display: flex;
  align-items: center;
  justify-content: center;
  width: 24px;
  height: 24px;
  border-radius: 3px;
  background: ${({ $active }) => ($active ? '#eaf7f8' : 'none')};

  &::after {
    content: '';
    position: absolute;
    bottom: 0;
    width: ${({ $active, $running }) => ($active ? 9 : $running ? 3 : 0)}px;
    height: 2px;
    border-radius: 1px;
    background: ${({ $active }) => ($active ? '#0d6fa8' : '#777')};
  }
`;

const SearchBox = styled.label`
  display: flex;
  align-items: center;
  gap: 6px;
  width: 136px;
  height: 22px;
  padding: 0 2px 0 7px;
  border-radius: 11px;
  background: #f1f8f9;
  color: #333;
  font-size: 8px;

  input {
    flex: 1;
    min-width: 0;
    outline: 0;
  }

  input::placeholder {
    color: #5c5c5c;
    opacity: 1;
  }
`;

const Tray = styled.div`
  display: flex;
  align-items: center;
  justify-content: flex-end;
  white-space: nowrap;
`;

const TrayItem = styled.div`
  display: flex;
  align-items: center;
  gap: 2px;
  margin-left: ${({ $gap }) => $gap}px;
  text-align: center;
`;

const Clock = styled.div`
  margin-left: 9px;
  text-align: right;
`;

const WindowsLogo = () => (
  <svg width="16" height="16" viewBox="0 0 16 16" aria-hidden="true">
    <path d="M0 0h7.500v7.500H0z" fill="#39a8e8" />
    <path d="M8.500 0H16v7.500H8.500z" fill="#2294e0" />
    <path d="M0 8.500h7.500V16H0z" fill="#1d8ddd" />
    <path d="M8.500 8.500H16V16H8.500z" fill="#0a72cc" />
  </svg>
);

const CastleArt = () => (
  <svg width="30" height="18" viewBox="0 0 30 18" aria-hidden="true">
    <circle cx="17" cy="8" r="7" fill="#e8cfe6" />
    <path d="M0 14c5-2 25-2 30 0l-2 2H2z" fill="#8fb36c" />
    <path d="M8 15V7l2-3 2 3v3h1V5l2-2 2 2v5h2V6l2-4 2 4v9z" fill="#d6a780" />
    <path d="M10 8v4M15 6v4M21 7v5" stroke="#a8714c" />
    <path d="M0 12c1-3 6-3 7 0zM23 12c1-3 6-3 7 0z" fill="#4b8f42" />
    <path d="M4 11v5M27 12v4" stroke="#6b4a2a" />
    <path d="M12 17l3-3 3 3z" fill="#6cbbd8" />
  </svg>
);

const DesktopTaskbar = () => (
  <Taskbar>
    <NewsWidget>
      <svg width="16" height="18" viewBox="0 0 16 18" aria-hidden="true">
        <rect x="0" y="5" width="13" height="11" rx="1" fill="#1685c5" />
        <path d="M3 9v5M6 11v3M9 8v6M11.500 10v4" stroke="#e8f7ff" strokeWidth="1.500" />
        <circle cx="11.500" cy="5" r="4.500" fill="#c62a1c" />
        <text x="11.500" y="7" fill="#fff" fontSize="6" textAnchor="middle">1</text>
      </svg>
      <span>
        Finance headline
        <small>India reported 6....</small>
      </span>
    </NewsWidget>
    <Apps>
      <AppButton aria-label="Start"><WindowsLogo /></AppButton>
      <SearchBox>
        <Search size={10} strokeWidth={2} />
        <input type="search" placeholder="Search" aria-label="Search" />
        <CastleArt />
      </SearchBox>
      <AppButton aria-label="Task view">
        <svg width="15" height="15" viewBox="0 0 15 15" aria-hidden="true">
          <path d="M5 0h9v10H5z" fill="#e5e5e5" />
          <path d="M1 4h7v6h5v4H1z" fill="#3a3a3a" />
          <path d="M8 4h5v6H8z" fill="#aaa" />
        </svg>
      </AppButton>
      <AppButton aria-label="Copilot">
        <svg width="16" height="15" viewBox="0 0 16 15" aria-hidden="true">
          <path d="M5 1h5L7 9C6 11 1 11 1 8c0-2 1.500-7 4-7z" fill="#2a9fd8" />
          <path d="M9 1c2 0 2.500 3 3 4H8z" fill="#2857c8" />
          <path d="M11 14H6l3-8c1-2 6-2 6 1 0 2-1.500 7-4 7z" fill="#e0559a" />
          <path d="M7 14c-2 0-2.500-3-3-4h4z" fill="#f0a030" />
          <path d="M12 5c3 0 3 2 3 3l-2 4-2-3z" fill="#a55be0" />
        </svg>
      </AppButton>
      <AppButton aria-label="Mail">
        <svg width="16" height="15" viewBox="0 0 16 15" aria-hidden="true">
          <path d="M2 6l7-5 6 4v9H4z" fill="#2b8be0" />
          <path d="M5 3l4-2 5 3-6 4z" fill="#79c8f5" />
          <path d="M7 14l8-8v8z" fill="#1560b8" />
          <rect x="0.500" y="7" width="7" height="7" rx="1" fill="#1c5fb0" />
          <circle cx="4" cy="10.500" r="1.600" fill="none" stroke="#fff" />
        </svg>
      </AppButton>
      <AppButton aria-label="Files">
        <svg width="16" height="14" viewBox="0 0 16 14" aria-hidden="true">
          <path d="M0 1h6l2 2h7v10H0z" fill="#e2a21a" />
          <path d="M0 4h15v9H0z" fill="#ffd251" />
          <path d="M3 10h9v4H3z" fill="#2478c8" />
        </svg>
      </AppButton>
      <AppButton $running aria-label="Chrome">
        <svg width="15" height="15" viewBox="0 0 16 16" aria-hidden="true">
          <circle cx="8" cy="8" r="8" fill="#f7c51d" />
          <path d="M8 8L1.100 4A8 8 0 0 1 14.900 4z" fill="#db4437" />
          <path d="M8 8L1.100 4A8 8 0 0 0 8 16l3.500-6z" fill="#1c9f55" />
          <circle cx="8" cy="8" r="4" fill="#fff" />
          <circle cx="8" cy="8" r="3" fill="#3a7de8" />
        </svg>
      </AppButton>
      <AppButton aria-label="Remote desktop">
        <svg width="16" height="15" viewBox="0 0 16 15" aria-hidden="true">
          <path d="M1 2l9-2v9l-8 1z" fill="#2440b8" />
          <path d="M5 1l5-1v6z" fill="#5a7ae8" />
          <path d="M3 11l7-1 2 3-6 1z" fill="#b8c0cc" />
          <circle cx="12" cy="11.500" r="3.200" fill="#d5dcd8" stroke="#8d9a95" />
        </svg>
      </AppButton>
      <AppButton aria-label="TradingView">
        <svg width="15" height="15" viewBox="0 0 15 15" aria-hidden="true">
          <rect width="15" height="15" rx="2" fill="#0d0d0d" />
          <path d="M2 5h5v6H4.500V7.500H2zM10.500 5H14l-2.500 6H9z" fill="#fff" />
          <circle cx="8.800" cy="6.200" r="1.200" fill="#fff" />
        </svg>
      </AppButton>
      <AppButton $active aria-label="MetaTrader">
        <svg width="17" height="16" viewBox="0 0 17 16" aria-hidden="true">
          <path d="M8 1c2 0 4 1 5 5 3 3 4 6 1 8H3c-3-2-2-5 1-8 0-3 2-5 4-5z" fill="#3c8f4c" />
          <path d="M1 10c-1 3 1 5 4 5h4l-4-6z" fill="#2b79b5" />
          <path d="M9 15h4c3 0 4-3 2-6l-4-1z" fill="#c9a22c" />
          <circle cx="8.500" cy="8.500" r="4" fill="#f4ecc8" stroke="#d3b24a" />
          <path d="M8.500 6v5M7 7.500h3M7 9.500h3" stroke="#b58c22" />
        </svg>
      </AppButton>
    </Apps>
    <Tray>
      <TrayItem><ChevronUp size={10} strokeWidth={2} /></TrayItem>
      <TrayItem $gap={10}>
        <svg width="11" height="8" viewBox="0 0 11 8" aria-hidden="true">
          <path d="M2.500 7.500C0 7.500 0 4 2.500 4 3 0 8 0 8.300 3.500c3 0 3 4 0 4z" fill="#ccc" stroke="#555" />
        </svg>
      </TrayItem>
      <TrayItem $gap={12}>ENG<br />IN</TrayItem>
      <TrayItem $gap={10}><Wifi size={10} strokeWidth={2} /></TrayItem>
      <TrayItem $gap={5}><Volume2 size={10} strokeWidth={2} /></TrayItem>
      <TrayItem $gap={5}>
        <svg width="13" height="9" viewBox="0 0 13 9" aria-hidden="true">
          <rect x="0.500" y="1.500" width="11" height="6" rx="1" fill="#2a9a3c" stroke="#234a28" />
          <path d="M12.500 3.500v2" stroke="#234a28" />
          <path d="M4 0l-1 4h2L4 8" stroke="#123016" fill="none" />
        </svg>
        99%
      </TrayItem>
      <Clock>06:08 PM<br />02-06-2026</Clock>
    </Tray>
  </Taskbar>
);

const App = () => (
  <Window>
    <GlobalStyle />
    <TopToolbar />
    <Workspace>
      <Sidebar>
        <MarketWatch />
        <Navigator />
      </Sidebar>
      <Chart />
    </Workspace>
    <BottomToolbox />
    <StatusBar>
      <span>For Help, press F1</span>
      <span>Default</span>
      <span />
      <span />
      <span />
      <span />
      <span />
      <span />
      <span>
        <Glyph size={8} color={green}><path d="M1 11V9M4 11V7M7 11V4M10 11V1" strokeWidth="1.600" /></Glyph>
        253.72 ms
      </span>
    </StatusBar>
    <DesktopTaskbar />
  </Window>
);

export default App;
